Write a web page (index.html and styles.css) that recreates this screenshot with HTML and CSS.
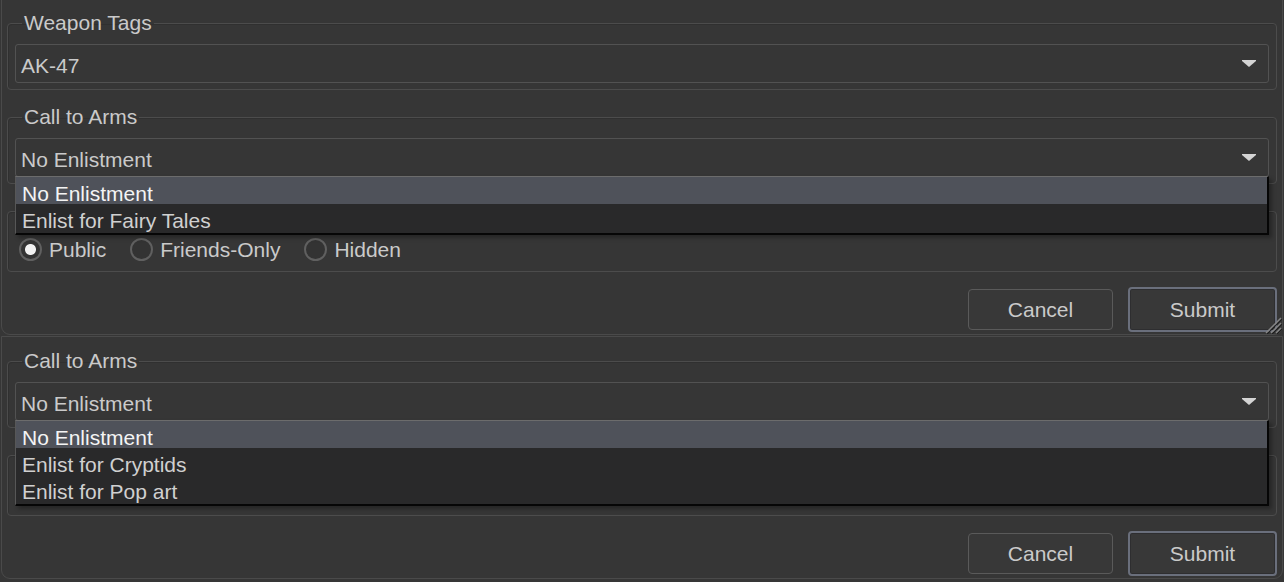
FILE: index.html
```html
<!DOCTYPE html>
<html lang="en">
<head>
    <meta charset="UTF-8">
    <meta name="viewport" content="width=device-width, initial-scale=1.0">
    <title>Enlistment Settings</title>
    <link rel="stylesheet" href="styles.css">
</head>
<body>

    <!-- Dialog with weapon tags and the call-to-arms menu opened -->
    <form class="panel first">
        <fieldset class="group">
            <legend>Weapon Tags</legend>
            <div class="combo">
                <span class="value">AK-47</span>
                <svg class="arrow" width="14" height="7" viewBox="0 0 14 7"><polygon points="0,0 14,0 14,1 7,7 0,1" /></svg>
            </div>
        </fieldset>

        <fieldset class="group">
            <legend>Call to Arms</legend>
            <div class="combo">
                <span class="value">No Enlistment</span>
                <svg class="arrow" width="14" height="7" viewBox="0 0 14 7"><polygon points="0,0 14,0 14,1 7,7 0,1" /></svg>
                <ul class="menu">
                    <li class="active">No Enlistment</li>
                    <li>Enlist for Fairy Tales</li>
                </ul>
            </div>
        </fieldset>

        <!-- visibility group, its caption sits under the open list -->
        <fieldset class="group" aria-label="Visibility">
            <legend class="blank"></legend>
            <div class="radios">
                <label class="radio"><input type="radio" name="vis-a" checked>Public</label>
                <label class="radio"><input type="radio" name="vis-a">Friends-Only</label>
                <label class="radio"><input type="radio" name="vis-a">Hidden</label>
            </div>
        </fieldset>

        <div class="actions">
            <button type="button" class="btn">Cancel</button>
            <button type="submit" class="btn primary">Submit</button>
        </div>

        <svg class="grip" width="20" height="20" viewBox="0 0 20 20">
            <path class="grip-dark" d="M20 5 L5 20 M20 10 L10 20 M20 15 L15 20" />
            <path class="grip-light" d="M19 4 L4 19 M19 9 L9 19 M19 14 L14 19" />
        </svg>
    </form>

    <!-- Second dialog, call-to-arms menu with more choices -->
    <form class="panel">
        <fieldset class="group">
            <legend>Call to Arms</legend>
            <div class="combo">
                <span class="value">No Enlistment</span>
                <svg class="arrow" width="14" height="7" viewBox="0 0 14 7"><polygon points="0,0 14,0 14,1 7,7 0,1" /></svg>
                <ul class="menu">
                    <li class="active">No Enlistment</li>
                    <li>Enlist for Cryptids</li>
                    <li>Enlist for Pop art</li>
                </ul>
            </div>
        </fieldset>

        <!-- covered by the open list above -->
        <fieldset class="group" aria-label="Visibility">
            <legend class="blank"></legend>
            <div class="radios">
                <label class="radio radio-wide"><input type="radio" name="vis-b" aria-label="Public" checked></label>
                <label class="radio radio-wider"><input type="radio" name="vis-b" aria-label="Friends-Only"></label>
                <label class="radio"><input type="radio" name="vis-b" aria-label="Hidden"></label>
            </div>
        </fieldset>

        <div class="actions">
            <button type="button" class="btn">Cancel</button>
            <button type="submit" class="btn primary">Submit</button>
        </div>
    </form>

</body>
</html>
```

FILE: styles.css
```css
/* Reset */
* {
    box-sizing: border-box;
}

body {
    margin: 0;
    background-color: #363636;
    color: #cacaca;
    font-family: "Liberation Sans", Arial, sans-serif;
    font-size: 21px;
    overflow: hidden;
}

/* Dialog panels */
.panel {
    position: relative;
    margin: 1px 1px 0;
    padding: 12px 5px 2px;
    border: 1px solid #4a4a4a;
    border-radius: 0 0 9px 9px;
}

.panel.first {
    margin-top: -2px;
}

/* Group boxes */
.group {
    margin: 0;
    padding: 9px 7px 6px;
    min-width: 0;
    border: 1px solid #4c4c4c;
    border-radius: 4px;
    box-shadow: inset 1px 1px 0 #303030;
}

.group + .group {
    margin-top: 15px;
}

.group legend {
    margin-left: 7px;
    padding: 0 2px;
    line-height: 24px;
    color: #cacaca;
}

.group legend.blank {
    width: 90px;
    height: 24px;
}

/* Combo box */
.combo {
    position: relative;
    display: flex;
    align-items: center;
    justify-content: space-between;
    height: 39px;
    padding: 0 12px 0 5px;
    border: 1px solid #525252;
    border-radius: 3px;
}

.combo .value {
    padding-top: 5px;
}

.arrow polygon {
    fill: #d4d4d4;
}

/* Open drop-down list */
.menu {
    position: absolute;
    top: 100%;
    left: -1px;
    right: -1px;
    z-index: 5;
    margin: 0;
    padding: 0 0 2px;
    list-style: none;
    background-color: #29292a;
    border-top: 1px solid #6c6c6c;
    border-left: 1px solid #575757;
    border-right: 2px solid #060606;
    border-bottom: 2px solid #060606;
    box-shadow: 3px 3px 4px rgba(0, 0, 0, 0.3);
}

.menu li {
    height: 27px;
    padding: 6px 6px 0;
    line-height: 21px;
    white-space: nowrap;
    color: #d0d0d0;
}

.menu li.active {
    background-color: #4f525a;
    color: #f4f4f4;
}

/* Radio row */
.radios {
    display: flex;
    align-items: center;
    gap: 24px;
    height: 33px;
    padding: 2px 0 0 4px;
}

.radio {
    display: flex;
    align-items: center;
    gap: 7px;
}

.radio-wide {
    width: 86px;
}

.radio-wider {
    width: 152px;
}

.radio input {
    appearance: none;
    width: 23px;
    height: 23px;
    margin: 0;
    border: 2px solid #606060;
    border-radius: 50%;
    background-color: #333;
}

.radio input:checked {
    background: radial-gradient(circle, #f2f2f2 0 5px, #333 6px);
}

/* Buttons */
.actions {
    display: flex;
    justify-content: flex-end;
    align-items: center;
    gap: 15px;
    height: 46px;
    margin-top: 14px;
}

.btn {
    width: 145px;
    height: 41px;
    padding: 2px 0 0;
    background-color: #383838;
    border: 1px solid #5a5a5a;
    border-radius: 4px;
    color: #cacaca;
    font: inherit;
}

.btn.primary {
    width: 149px;
    height: 45px;
    border: 2px solid #6a6f7c;
    box-shadow: inset 0 0 0 1px #2e2e30;
}

/* Resize grip in the corner */
.grip {
    position: absolute;
    right: 0;
    bottom: 0;
}

.grip-light {
    stroke: #858585;
    stroke-width: 1.5;
}

.grip-dark {
    stroke: #1e1e1e;
    stroke-width: 1.2;
}
```
